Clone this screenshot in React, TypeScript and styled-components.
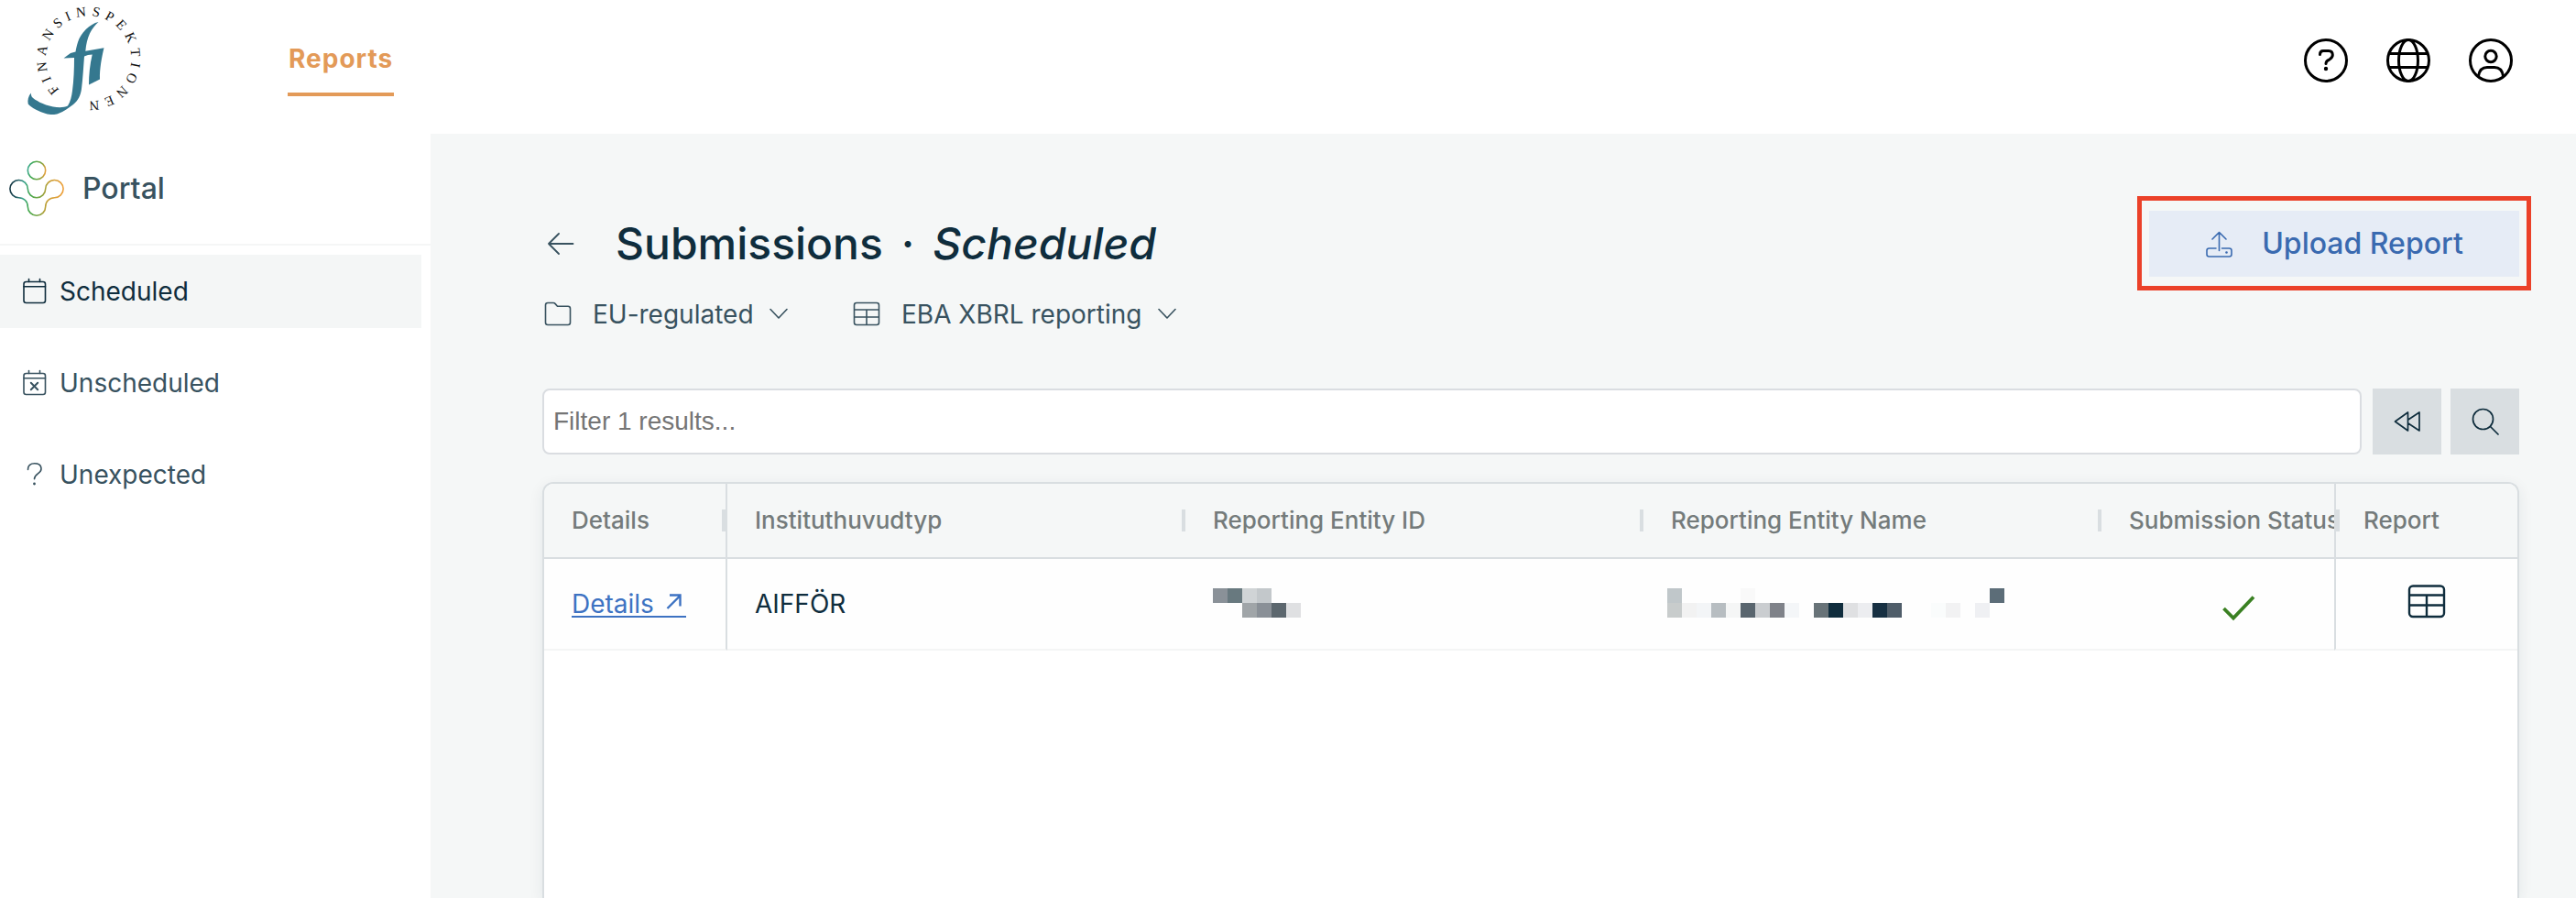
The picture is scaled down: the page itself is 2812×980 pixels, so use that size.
import React from "react";
import styled, { createGlobalStyle } from "styled-components";

const c = {
  ink: "#0f2d3d",
  slate: "#38525f",
  muted: "#747b7b",
  line: "#d9dee1",
  page: "#f5f7f7",
  orange: "#e39a58",
  blue: "#3a6ab0",
};

const GlobalStyle = createGlobalStyle`
  *, *::before, *::after { box-sizing: border-box; }
  body {
    margin: 0;
    background: #fff;
    color: ${c.ink};
    font-family: Inter, "Liberation Sans", sans-serif;
    font-size: 28px;
    line-height: 36px;
  }
  button, select, input { font: inherit; color: inherit; }
  svg { display: block; flex: none; }
`;

const Page = styled.div`
  min-height: 100vh;
  display: flex;
  flex-direction: column;
`;

const Header = styled.header`
  display: flex;
  align-items: flex-start;
  height: 146px;
  padding-right: 69px;
`;

const TopNav = styled.nav`
  flex: 1;
  padding: 46px 0 0 154px;
`;

const TopLink = styled.a`
  display: inline-block;
  padding: 0 1px 19px;
  border-bottom: 4px solid ${c.orange};
  color: ${c.orange};
  font-weight: 700;
  letter-spacing: 1px;
  text-decoration: none;
`;

const HeaderActions = styled.div`
  display: flex;
  gap: 42px;
  padding-top: 42px;
`;

const IconButton = styled.button`
  padding: 0;
  border: 0;
  background: none;
  color: #000;
`;

const Body = styled.div`
  flex: 1;
  display: flex;
`;

const Sidebar = styled.aside`
  flex: none;
  width: 470px;
`;

const Brand = styled.div`
  display: flex;
  align-items: center;
  gap: 18px;
  height: 122px;
  padding-left: 8px;
  border-bottom: 2px solid #f5f6f6;
  color: ${c.slate};
  font-size: 32px;
  font-weight: 500;
`;

const SideNav = styled.nav`
  display: flex;
  flex-direction: column;
  gap: 20px;
  padding: 10px 10px 0 0;
`;

const SideLink = styled.a<{ $active?: boolean }>`
  display: flex;
  align-items: center;
  gap: 13px;
  height: 80px;
  padding-left: 24px;
  background: ${(p) => (p.$active ? "#f4f6f6" : "transparent")};
  color: ${(p) => (p.$active ? c.ink : c.slate)};
  text-decoration: none;
`;

const Main = styled.main`
  flex: 1;
  min-width: 0;
  display: flex;
  flex-direction: column;
  padding: 84px 62px 0 122px;
  background: ${c.page};
`;

const TitleRow = styled.div`
  display: flex;
  align-items: center;
  height: 72px;
`;

const Title = styled.h1`
  flex: 1;
  display: flex;
  gap: 20px;
  margin: 0 0 0 40px;
  font-size: 48px;
  font-weight: 500;
  line-height: 60px;
`;

const UploadFrame = styled.div`
  position: relative;
  &::after {
    content: "";
    position: absolute;
    inset: -16px -13px -15px;
    border: 5px solid #eb4129;
    pointer-events: none;
  }
`;

const UploadButton = styled.button`
  display: flex;
  align-items: center;
  justify-content: center;
  gap: 32px;
  width: 404px;
  height: 72px;
  border: 0;
  padding: 0;
  background: #e6ecf6;
  color: ${c.blue};
  font-size: 32px;
  font-weight: 500;
`;

const Scope = styled.div`
  display: flex;
  gap: 68px;
  margin: 23px 0 63px;
  color: ${c.slate};
`;

const ScopeField = styled.label`
  display: flex;
  align-items: center;
  padding-left: 2px;
  svg:last-child { margin-left: 16px; }
`;

const ScopeSelect = styled.select`
  appearance: none;
  margin-left: 23px;
  padding: 0;
  border: 0;
  background: none;
`;

const FilterRow = styled.div`
  display: flex;
  gap: 10px;
  margin-bottom: 30px;
`;

const FilterInput = styled.input`
  flex: 1;
  min-width: 0;
  height: 72px;
  margin-right: 2px;
  padding: 0 10px;
  border: 2px solid #dadde1;
  border-radius: 8px;
  background: #fff;
  font-family: "Liberation Sans", Arial, sans-serif;
  &::placeholder { color: #757575; }
`;

const SquareButton = styled.button`
  display: grid;
  place-items: center;
  width: 75px;
  height: 72px;
  padding: 0;
  border: 0;
  background: #d9dee1;
  color: ${c.ink};
`;

const GridPanel = styled.section`
  flex: 1;
  border: 2px solid ${c.line};
  border-bottom: 0;
  border-radius: 12px 12px 0 0;
  background: #fff;
  box-shadow: 0 4px 16px rgba(15, 45, 61, 0.08);
  overflow: hidden;
`;

const Table = styled.table`
  width: 100%;
  table-layout: fixed;
  border-collapse: separate;
  border-spacing: 0;
`;

const Col = styled.col<{ $w?: number }>`
  width: ${(p) => (p.$w ? `${p.$w}px` : "auto")};
`;

const HeadCell = styled.th<{ $edge?: "left" | "right"; $tick?: "left" | "right" }>`
  position: relative;
  height: 82px;
  padding: 0 0 0 30px;
  border: 0 solid ${c.line};
  border-bottom-width: 2px;
  border-right-width: ${(p) => (p.$edge === "right" ? 2 : 0)}px;
  border-left-width: ${(p) => (p.$edge === "left" ? 2 : 0)}px;
  background: #f5f7f7;
  color: ${c.muted};
  font-size: 26px;
  font-weight: 500;
  text-align: left;
  white-space: nowrap;
  overflow: hidden;
  &::after {
    content: "";
    display: ${(p) => (p.$tick ? "block" : "none")};
    position: absolute;
    top: 28px;
    ${(p) => (p.$tick === "left" ? "left: 0;" : "right: 0;")}
    width: 4px;
    height: 24px;
    background: ${c.line};
  }
`;

const Cell = styled.td<{ $edge?: "left" | "right" }>`
  height: 100px;
  padding: 0 0 0 30px;
  border: 0 solid ${c.line};
  border-bottom: 2px solid #f4f5f5;
  border-right-width: ${(p) => (p.$edge === "right" ? 2 : 0)}px;
  border-left-width: ${(p) => (p.$edge === "left" ? 2 : 0)}px;
  background: #fefefe;
  white-space: nowrap;
  overflow: hidden;
`;

const CenteredCell = styled(Cell)`
  padding: 0;
`;

const CellCenter = styled.div<{ $w: number }>`
  display: flex;
  justify-content: center;
  width: ${(p) => p.$w}px;
`;

const DetailsLink = styled.a`
  display: inline-flex;
  gap: 13px;
  padding-right: 5px;
  border-bottom: 2px solid currentColor;
  color: #3d72c2;
  line-height: 26px;
  text-decoration: none;
`;

const FiLogo = () => (
  <svg width="160" height="140" viewBox="0 0 160 140" role="img" aria-label="Finansinspektionen">
    <path
      fill="#35788f"
      d="M107.5 24C98 26 88 36 85 46C83.800 50 83 53 82.500 56.500L77 58L69.500 63.500L81 63C81 75 80.500 88 79 99C78.200 105 77 111 74 115.500C70 117.500 64 117.500 58 116.500C47 114.500 38 109 35 106C34 104.500 34 103 33.700 101.500C31 105 29.800 109 30.700 113.500C35 118 42 121.500 50 124C54 125.200 60 125.500 63.500 124C70 121.500 75 117.500 80 114C85.500 109.500 88 104 89 97C90.500 85 91 74 92 61.500L96 60L100.700 59.500C98 71 97 82 97 92.500L109 86.500C108.700 75 111 63 113.500 52.300L93.300 55.800C94 48 95.500 42 98 36.500C100.500 31.500 104 27 107.500 24Z"
    />
    <defs>
      <path id="fi-circle" d="M65 98A46.500 46.500 0 1 1 98 110.500" />
    </defs>
    <text fontFamily="Liberation Serif, serif" fontSize="15" letterSpacing="5.500" fill="#111">
      <textPath href="#fi-circle">FINANSINSPEKTIONEN</textPath>
    </text>
  </svg>
);

const PortalLogo = () => (
  <svg width="64" height="64" viewBox="0 0 64 64" fill="none" strokeWidth="1.6" aria-hidden="true">
    <defs>
      <linearGradient id="portal-body" gradientUnits="userSpaceOnUse" x1="2" y1="28" x2="62" y2="34">
        <stop offset="0" stopColor="#14323f" />
        <stop offset="0.15" stopColor="#235a63" />
        <stop offset="0.27" stopColor="#3aa58c" />
        <stop offset="0.4" stopColor="#45a84c" />
        <stop offset="0.58" stopColor="#7aa443" />
        <stop offset="0.72" stopColor="#c99f35" />
        <stop offset="1" stopColor="#f0a03c" />
      </linearGradient>
      <linearGradient id="portal-head" gradientUnits="userSpaceOnUse" x1="22" y1="10" x2="42" y2="13">
        <stop offset="0" stopColor="#3aa98f" />
        <stop offset="0.3" stopColor="#45a84c" />
        <stop offset="0.7" stopColor="#7aa443" />
        <stop offset="1" stopColor="#e9a03c" />
      </linearGradient>
    </defs>
    <circle cx="32" cy="12" r="9.700" stroke="url(#portal-head)" />
    <path
      stroke="url(#portal-body)"
      d="M12.500 22.500C18 22.500 22.300 27 22.300 32A9.700 9.700 0 0 0 41.700 32C41.700 27 46 22.500 51.500 22.500A9.600 9.600 0 0 1 51.500 41.700C46 41.700 41.700 46 41.700 51.500A9.700 9.700 0 0 1 22.300 51.500C22.300 46 18 41.700 12.500 41.700A9.600 9.600 0 0 1 12.500 22.500Z"
    />
  </svg>
);

const HelpIcon = () => (
  <svg width="48" height="48" viewBox="0 0 48 48" fill="none" stroke="currentColor" strokeWidth="3" strokeLinecap="round" strokeLinejoin="round">
    <circle cx="24" cy="24" r="22.500" />
    <path d="M17.500 17.500C17.500 14.500 19 13.500 21 13.500H27C29.800 13.500 31.300 15.500 31.300 18C31.300 20.500 30 21.600 28 22.800C25.500 24 24 24.700 24 27.500" />
    <circle cx="24" cy="33" r="2.200" fill="currentColor" stroke="none" />
  </svg>
);

const GlobeIcon = () => (
  <svg width="48" height="48" viewBox="0 0 48 48" fill="none" stroke="currentColor" strokeWidth="3">
    <circle cx="24" cy="24" r="22.500" />
    <ellipse cx="24" cy="24" rx="10.500" ry="22.500" />
    <path d="M3 16.500H45M3 31.500H45" />
  </svg>
);

const UserIcon = () => (
  <svg width="48" height="48" viewBox="0 0 48 48" fill="none" stroke="currentColor" strokeWidth="3">
    <circle cx="24" cy="24" r="22.500" />
    <circle cx="24" cy="19.500" r="6.200" />
    <path d="M10.500 41C11.500 34.500 15 31.500 20 31.500H28C33 31.500 36.500 34.500 37.500 41" />
  </svg>
);

const CalendarIcon = ({ crossed }: { crossed?: boolean }) => (
  <svg width="28" height="30" viewBox="0 0 28 30" fill="none" stroke="currentColor" strokeWidth="1.600" strokeLinecap="round">
    <rect x="2" y="4.500" width="23.500" height="23" rx="2.500" />
    <path d="M2 9.800H25.500M7.500 4.500V1.500M19.500 4.500V1.500" />
    {crossed && <path d="M9.800 14.800L17.200 22.200M17.200 14.800L9.800 22.200" strokeWidth="2" />}
  </svg>
);

const QuestionIcon = () => (
  <svg width="28" height="30" viewBox="0 0 28 30" fill="none" stroke="currentColor" strokeWidth="1.600" strokeLinecap="round">
    <path d="M6.500 9.500C6.500 4.500 9.500 2.800 13.700 2.800C18 2.800 21 5 21 8.800C21 14 13.500 14 13.500 19.800" />
    <circle cx="13.500" cy="25" r="1.400" fill="currentColor" stroke="none" />
  </svg>
);

const BackIcon = () => (
  <svg width="40" height="40" viewBox="0 0 40 40" fill="none" stroke={c.slate} strokeWidth="1.800" strokeLinecap="round" strokeLinejoin="round">
    <path d="M33.500 20H7M18 9L7 20L18 31" />
  </svg>
);

const UploadIcon = () => (
  <svg width="30" height="32" viewBox="0 0 30 32" fill="none" stroke="currentColor" strokeWidth="1.600" strokeLinecap="round" strokeLinejoin="round">
    <path d="M15.500 23.500V4M8 11L15.500 3.500L23 11M12 21H4.500C3 21 2 22 2 23.500V27.500C2 29 3 30 4.500 30H26.500C28 30 29 29 29 27.500V23.500C29 22 28 21 26.500 21H18.500" />
    <circle cx="23.500" cy="25.500" r="1.300" fill="currentColor" stroke="none" />
  </svg>
);

const FolderIcon = () => (
  <svg width="30" height="28" viewBox="0 0 30 28" fill="none" stroke="currentColor" strokeWidth="1.600" strokeLinejoin="round">
    <path d="M1.500 4C1.500 2.500 2.500 1.500 4 1.500H10C11 1.500 11.500 1.800 12.200 2.600L14.500 5.300H26C27.500 5.300 28.500 6.300 28.500 7.800V23C28.500 24.500 27.500 25.500 26 25.500H4C2.500 25.500 1.500 24.500 1.500 23Z" />
  </svg>
);

const TableIcon = ({ large }: { large?: boolean }) =>
  large ? (
    <svg width="42" height="42" viewBox="0 0 42 42" fill="none" stroke="currentColor" strokeWidth="2.400">
      <rect x="2" y="1.500" width="38" height="33.500" rx="4" />
      <path d="M2 11.500H40M2 22.500H40M21 11.500V35" />
    </svg>
  ) : (
    <svg width="30" height="28" viewBox="0 0 30 28" fill="none" stroke="currentColor" strokeWidth="1.600">
      <rect x="1.500" y="1.500" width="27" height="24" rx="2.500" />
      <path d="M1.500 9H28.500M1.500 17H28.500M15 9V25.500" />
    </svg>
  );

const ChevronIcon = () => (
  <svg width="22" height="14" viewBox="0 0 22 14" fill="none" stroke="currentColor" strokeWidth="1.600" strokeLinecap="round" strokeLinejoin="round">
    <path d="M2 1.500L11 11L20 1.500" />
  </svg>
);

const RewindIcon = () => (
  <svg width="30" height="24" viewBox="0 0 30 24" fill="none" stroke="currentColor" strokeWidth="1.700" strokeLinejoin="round">
    <path d="M1.500 12L15.500 2V22ZM15.500 10.300L28 2V22L15.500 13.700" />
  </svg>
);

const SearchIcon = () => (
  <svg width="30" height="30" viewBox="0 0 30 30" fill="none" stroke="currentColor" strokeWidth="1.700" strokeLinecap="round">
    <circle cx="12.500" cy="12.500" r="11" />
    <path d="M20.500 20.500L29 29" />
  </svg>
);

const OpenIcon = () => (
  <svg width="17" height="20" viewBox="0 0 17 20" fill="none" stroke="currentColor" strokeWidth="2.400" aria-hidden="true">
    <path d="M1.500 18L15.500 4M4 3.500H15.500V15.500" />
  </svg>
);

const CheckIcon = () => (
  <svg width="36" height="38" viewBox="0 0 36 38" fill="none" stroke="#3a8022" strokeWidth="3.800" aria-label="Submitted">
    <path d="M1.500 24L12 34.500L34 11.500" />
  </svg>
);

type Block = [column: number, row: number, color: string];

const idBlocks: Block[] = [
  [0, 0, "#8a9198"], [1, 0, "#68797f"], [2, 0, "#d0d4d6"], [3, 0, "#c3c8cb"],
  [2, 1, "#a0a5a8"], [3, 1, "#8a9097"], [4, 1, "#5c676e"], [5, 1, "#dfe0e2"],
];

const nameBlocks: Block[] = [
  [0, 0, "#c0c7ca"], [5, 0, "#f9f9f9"], [22, 0, "#5c6d78"],
  [0, 1, "#c8cccc"], [1, 1, "#f2f2f2"], [2, 1, "#f3f5f7"], [3, 1, "#b7bdc1"],
  [4, 1, "#f5f6f6"], [5, 1, "#59656e"], [6, 1, "#cacdd0"], [7, 1, "#7f8289"],
  [8, 1, "#f4f6f8"], [10, 1, "#687378"], [11, 1, "#102d3d"], [12, 1, "#dfe0e2"],
  [13, 1, "#ecedf0"], [14, 1, "#173042"], [15, 1, "#4f5d69"], [18, 1, "#fafcfc"],
  [19, 1, "#f2f2f3"], [21, 1, "#eff0f3"],
];

const Redacted = ({ blocks, columns, origin = 0 }: { blocks: Block[]; columns: number; origin?: number }) => (
  <svg
    width={columns * 16}
    height="34"
    viewBox={`${origin} 0 ${columns * 16} 34`}
    overflow="visible"
    shapeRendering="crispEdges"
    aria-label="Redacted"
  >
    {blocks.map(([col, row, fill]) => (
      <rect key={`${col}-${row}`} x={col * 16} y={row * 16} width="16" height="16" fill={fill} />
    ))}
  </svg>
);

export default function App() {
  return (
    <Page>
      <GlobalStyle />
      <Header>
        <FiLogo />
        <TopNav>
          <TopLink href="#reports">Reports</TopLink>
        </TopNav>
        <HeaderActions>
          <IconButton aria-label="Help"><HelpIcon /></IconButton>
          <IconButton aria-label="Language"><GlobeIcon /></IconButton>
          <IconButton aria-label="Account"><UserIcon /></IconButton>
        </HeaderActions>
      </Header>
      <Body>
        <Sidebar>
          <Brand>
            <PortalLogo />
            Portal
          </Brand>
          <SideNav>
            <SideLink href="#scheduled" $active><CalendarIcon />Scheduled</SideLink>
            <SideLink href="#unscheduled"><CalendarIcon crossed />Unscheduled</SideLink>
            <SideLink href="#unexpected"><QuestionIcon />Unexpected</SideLink>
          </SideNav>
        </Sidebar>
        <Main>
          <TitleRow>
            <IconButton aria-label="Back"><BackIcon /></IconButton>
            <Title>
              <span>Submissions</span>
              <span>·</span>
              <em>Scheduled</em>
            </Title>
            <UploadFrame>
              <UploadButton><UploadIcon />Upload Report</UploadButton>
            </UploadFrame>
          </TitleRow>
          <Scope>
            <ScopeField>
              <FolderIcon />
              <ScopeSelect aria-label="Category"><option>EU-regulated</option></ScopeSelect>
              <ChevronIcon />
            </ScopeField>
            <ScopeField>
              <TableIcon />
              <ScopeSelect aria-label="Reporting type"><option>EBA XBRL reporting</option></ScopeSelect>
              <ChevronIcon />
            </ScopeField>
          </Scope>
          <FilterRow>
            <FilterInput aria-label="Filter results" placeholder="Filter 1 results..." />
            <SquareButton aria-label="Reset"><RewindIcon /></SquareButton>
            <SquareButton aria-label="Search"><SearchIcon /></SquareButton>
          </FilterRow>
          <GridPanel>
            <Table>
              <colgroup>
                <Col $w={200} />
                <Col $w={500} />
                <Col $w={500} />
                <Col $w={500} />
                <Col />
                <Col $w={200} />
              </colgroup>
              <thead>
                <tr>
                  <HeadCell $edge="right" $tick="right">Details</HeadCell>
                  <HeadCell $tick="right">Instituthuvudtyp</HeadCell>
                  <HeadCell $tick="right">Reporting Entity ID</HeadCell>
                  <HeadCell $tick="right">Reporting Entity Name</HeadCell>
                  <HeadCell>Submission Status</HeadCell>
                  <HeadCell $edge="left" $tick="left">Report</HeadCell>
                </tr>
              </thead>
              <tbody>
                <tr>
                  <Cell $edge="right"><DetailsLink href="#details">Details<OpenIcon /></DetailsLink></Cell>
                  <Cell>AIFFÖR</Cell>
                  <Cell><Redacted blocks={idBlocks} columns={6} /></Cell>
                  <Cell><Redacted blocks={nameBlocks} columns={23} origin={4} /></Cell>
                  <CenteredCell><CellCenter $w={300}><CheckIcon /></CellCenter></CenteredCell>
                  <CenteredCell $edge="left"><CellCenter $w={198}><TableIcon large /></CellCenter></CenteredCell>
                </tr>
              </tbody>
            </Table>
          </GridPanel>
        </Main>
      </Body>
    </Page>
  );
}
